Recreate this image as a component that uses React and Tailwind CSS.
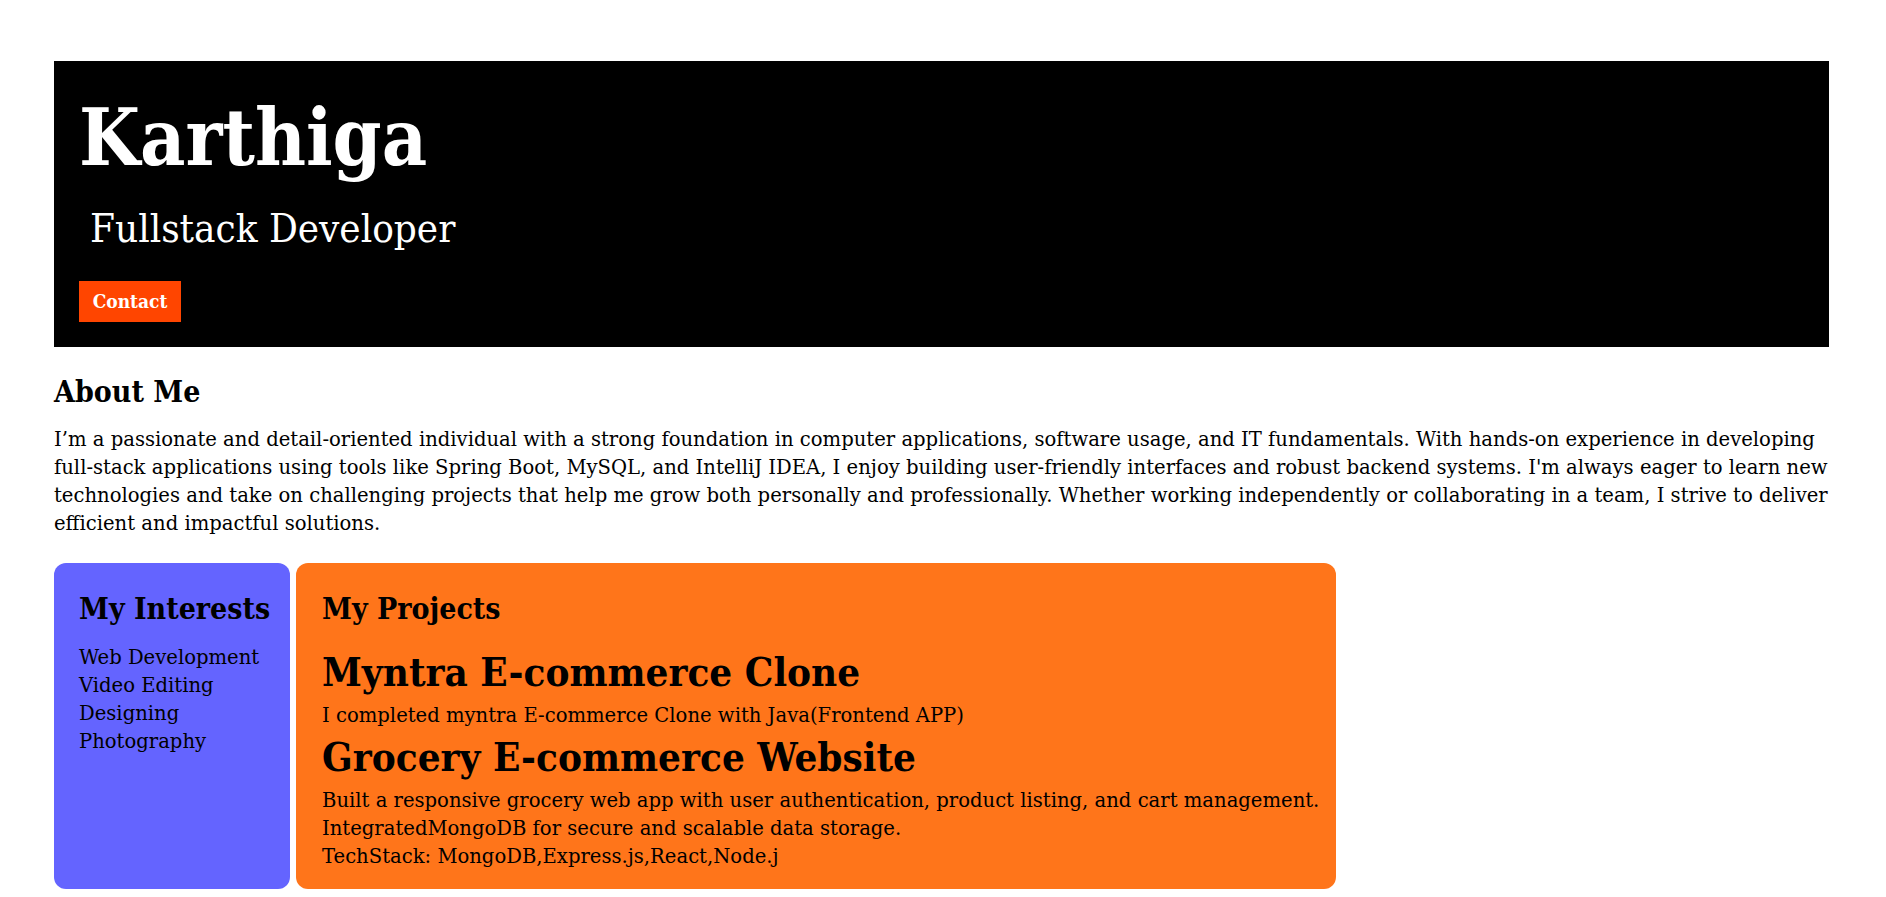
export default function App() {
    const interests = ['Web Development', 'Video Editing', 'Designing', 'Photography'];
    const display = "font-['DejaVu_Serif_Condensed','Liberation_Serif',serif]";

    return (
        <div className="min-h-screen bg-white text-black pl-[54px] pr-[57px] pt-[61px] pb-[9px] font-['DejaVu_Serif',serif]">
            {/* hero */}
            <header className="bg-black text-white pl-[25px] pt-[37px] pb-[25px]">
                <h1 className={`${display} text-[78px] leading-[80px] font-bold`}>Karthiga</h1>
                <h2 className={`${display} text-[40px] leading-[40px] font-normal mt-[30px] ml-[11px]`}>Fullstack Developer</h2>
                <button className={`${display} mt-[33px] h-[41px] w-[102px] bg-[#ff4500] text-white text-[19px] font-bold flex items-center justify-center`}>
                    Contact
                </button>
            </header>

            <section>
                <h2 className={`${display} text-[30px] leading-[30px] font-bold mt-[30px]`}>About Me</h2>
                <p className="text-[19.6px] leading-[28px] mt-[19px]">
                    I’m a passionate and detail-oriented individual with a strong foundation in computer applications, software usage, and IT fundamentals. With hands-on experience in developing full-stack applications using tools like Spring Boot, MySQL, and IntelliJ IDEA, I enjoy building user-friendly interfaces and robust backend systems. I'm always eager to learn new technologies and take on challenging projects that help me grow both personally and professionally. Whether working independently or collaborating in a team, I strive to deliver efficient and impactful solutions.
                </p>
            </section>

            <div className="flex gap-[6px] mt-[25px]">
                <div className="w-[236px] bg-[#6464ff] rounded-[12px] pl-[25px] pt-[31px]">
                    <h3 className={`${display} text-[30px] leading-[30px] font-bold whitespace-nowrap`}>My Interests</h3>
                    <ul className="mt-[20px] text-[19.6px] leading-[28px]">
                        {interests.map((item) => (
                            <li key={item}>{item}</li>
                        ))}
                    </ul>
                </div>

                <div className="w-[1040px] bg-[#ff751a] rounded-[12px] pl-[26px] pt-[31px] pb-[18px]">
                    <h3 className={`${display} text-[30px] leading-[30px] font-bold`}>My Projects</h3>
                    <h2 className={`${display} text-[40px] leading-[41px] font-bold mt-[27px]`}>Myntra E-commerce Clone</h2>
                    <p className="text-[19.6px] leading-[28px] mt-[10px]">I completed myntra E-commerce Clone with Java(Frontend APP)</p>
                    <h2 className={`${display} text-[40px] leading-[41px] font-bold mt-[6px]`}>Grocery E-commerce Website</h2>
                    <p className="text-[19.6px] leading-[28px] mt-[10px]">
                        Built a responsive grocery web app with user authentication, product listing, and cart management.
                        <br />
                        IntegratedMongoDB for secure and scalable data storage.
                        <br />
                        TechStack: MongoDB,Express.js,React,Node.j
                    </p>
                </div>
            </div>
        </div>
    );
}
